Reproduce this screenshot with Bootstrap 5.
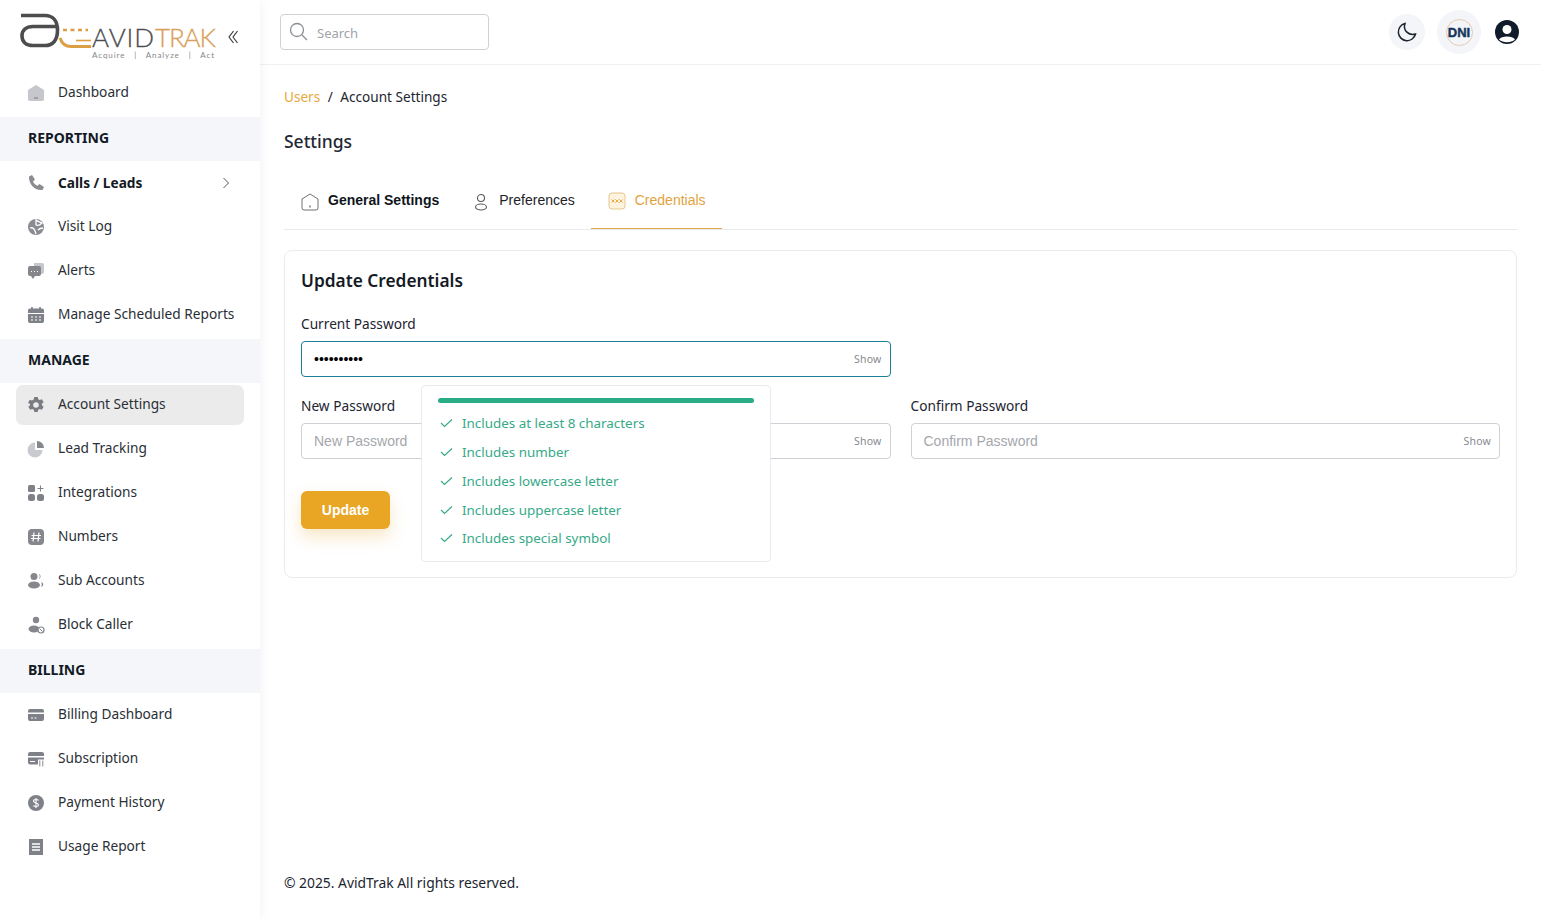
<!DOCTYPE html>
<html lang="en">
<head>
<meta charset="utf-8">
<title>Account Settings</title>
<link href="https://cdn.jsdelivr.net/npm/bootstrap@5.3.0/dist/css/bootstrap.min.css" rel="stylesheet">
<style>
html,body{height:100%;overflow:hidden}
body{font-family:"Noto Sans",sans-serif;font-size:13.7px;color:#1c2530;background:#fff}
.shell{height:919px}
.side{width:260px;flex:none;box-shadow:0 0 12px rgba(30,40,70,.06);background:#fff;z-index:2}
.logo-row{height:71px;padding:12px 0 0 20px}
.chev{margin:18px 0 0 10px}
.tile{height:40px;margin:2px 16px;padding:0 0 2px 11px;border-radius:7px;gap:13px;color:#2a2f36;line-height:1;font-size:13.7px}
.tile svg{width:18px;height:18px;flex:none;margin-top:2px}
.tile.on{background:#ebebec}
.tile.strong{font-weight:700;color:#14191f;padding-bottom:0}
.tile.strong svg{margin-top:0}
.band{height:44px;padding:0 0 4px 28px;background:#f4f6fa;font-weight:700;color:#121a26;margin-top:2px;font-size:14px}
.topbar{height:65px;padding:0 22px 0 20px;border-bottom:1px solid #f0f1f3}
.seek{width:209px;height:36px;border:1px solid #ced1d6;border-radius:4px;padding-left:8px;gap:9px;color:#a0a4aa;font-size:13px}
.seek span{margin-top:3px}
.seek svg{margin-top:-2px}
.roundbtn{border-radius:50%;background:#f3f5f9}
.r36{width:36px;height:36px}
.r44{width:44px;height:44px;margin:0 14px 0 12px}
.dni{width:27px;height:27px;border-radius:50%;border:1px solid #e6c9b0;font:900 13px "Liberation Sans",sans-serif;color:#16345c;-webkit-text-stroke:.4px #16345c}
.page{padding:0 24px}
.crumbs{margin-top:22px;height:20px;gap:7.5px;line-height:20px;font-size:13.6px}
.crumbs .u{color:#e9a83c}
.pg-title{font-size:17.5px;font-weight:500;margin:21px 0 0;line-height:26px;color:#1f2833}
.tabbar{margin-top:16px;border-bottom:1px solid #e8e9eb;height:60px;font-family:"Liberation Sans",sans-serif;font-size:14px}
.tabi{padding:2px 16px 0;gap:9px;color:#1d2229}
.tabi svg{width:18px;height:18px;flex:none;margin-top:2px}
.tabi.b{font-weight:700;color:#10151c;padding:2px 17px 0}
.tabi.act{color:#e2a33d;border-bottom:1px solid #e0a94f;padding:2px 16.500px 0 17px}
.panel{margin-top:20px;height:328px;border:1px solid #e9ebee;border-radius:8px;padding:16px}
.panel h2{font-size:17.3px;font-weight:600;margin:1px 0 0;line-height:26px;color:#141b26}
.lbl{line-height:20px;margin:0 0 7px;color:#1c2530}
.gut{--bs-gutter-x:20px;margin-top:19px}
.flabel1{margin-top:20px}
.fld{height:36px;border:1px solid #ced1d6;border-radius:4px;font:14px "Liberation Sans",sans-serif;padding:0 12px;color:#a4a7ac}
.fld.focus{border-color:#1d7f93;color:#000}
.showit{font:10.5px "Noto Sans",sans-serif;color:#858a90;letter-spacing:.2px;margin-right:-4px}
.go{width:89px;height:38px;margin-top:32px;background:#e9a524;border:0;border-radius:6px;color:#fff;font:700 14px "Liberation Sans",sans-serif;box-shadow:0 8px 16px rgba(233,165,36,.25)}
.pop{position:absolute;left:130px;top:-11px;width:350px;height:177px;background:#fff;border:1px solid #e9ebee;border-radius:4px;padding:12px 16px 0;z-index:3}
.bar{height:5px;background:#2aad87;border-radius:3px;margin-bottom:6px}
.chk{height:28.75px;color:#36a988;gap:9px;font-size:13.4px}
.chk svg{margin-left:2px}
.foot{height:70px;padding:0 24px 25px;font-size:13.85px}
</style>
</head>
<body>
<div class="d-flex shell">
  <aside class="side d-flex flex-column">
    <div class="logo-row d-flex">
      <svg width="198" height="50" viewBox="20 12 198 50">
        <path d="M21 15.500H45C53 15.500 57.500 21 57.500 30C57.500 40 53 45.500 45 45.500H33C26 45.500 22 41.500 22 36C22 30.500 26 26.500 33 26.500H57" fill="none" stroke="#4d4d4f" stroke-width="3.600"/>
        <path d="M60 38C62 44 65 46.500 71 46.500H91" fill="none" stroke="#dd9f45" stroke-width="3"/>
        <path d="M63 30H88" fill="none" stroke="#dd9f45" stroke-width="2.500" stroke-dasharray="4 3.500"/>
        <path d="M76 40.500H91" fill="none" stroke="#dd9f45" stroke-width="1.600"/>
        <text x="92" y="47" font-family="Lato,sans-serif" font-weight="300" font-size="26" fill="#4d4d4f" stroke="#4d4d4f" stroke-width=".3" textLength="62">AVID</text>
        <text x="155" y="47" font-family="Lato,sans-serif" font-weight="300" font-size="26" fill="#d9a05a" stroke="#d9a05a" stroke-width=".3" textLength="61">TRAK</text>
        <text x="92" y="58" font-family="Lato,sans-serif" font-size="8" fill="#85878a" textLength="122" xml:space="preserve">Acquire   |   Analyze   |   Act</text>
      </svg>
      <svg class="chev" width="10" height="14" viewBox="0 0 10 14" fill="none" stroke="#333" stroke-width="1.100"><path d="M5.500 1 1 7l4.500 6M9.500 1 5 7l4.500 6"/></svg>
    </div>
    <div class="tile d-flex align-items-center"><svg viewBox="0 0 18 18"><path d="M9 1 17 6v9a2 2 0 0 1-2 2H3a2 2 0 0 1-2-2V6z" fill="#c6c7cd"/><path d="M7 14h4" stroke="#777" stroke-width="1"/></svg>Dashboard</div>
    <div class="band d-flex align-items-center">REPORTING</div>
    <div class="tile strong d-flex align-items-center"><svg viewBox="0 0 18 18"><path d="M2 2.500 5 1l3 4.500-2 2c.8 2 2.200 3.300 4.500 4.200L12.500 10l4.500 3-1.500 3C8 17 1.500 10 2 2.500z" fill="#8a8c92"/></svg>Calls / Leads<svg class="ms-auto chevr" viewBox="0 0 8 12" fill="none" stroke="#555" stroke-width="1" style="width:8px;height:12px;margin-right:14px"><path d="m1.500 1 5 5-5 5"/></svg></div>
    <div class="tile d-flex align-items-center"><svg viewBox="0 0 18 18"><circle cx="9" cy="9" r="8" fill="#8a8c92"/><path d="M9 2c2 2 5 2 6 3-2 2-4 3-6 2zM3 10c3-1 5 1 6 6M11 12c2-2 3-2 5-2" stroke="#fff" stroke-width="1.300" fill="none"/></svg>Visit Log</div>
    <div class="tile d-flex align-items-center"><svg viewBox="0 0 18 18"><path d="M7 1h8a2 2 0 0 1 2 2v7a2 2 0 0 1-2 2H7z" fill="#c6c7cd"/><path d="M3 4h9a2 2 0 0 1 2 2v6a2 2 0 0 1-2 2H8l-2 3-2-3H3a2 2 0 0 1-2-2V6a2 2 0 0 1 2-2z" fill="#84868c"/><path d="M4 9.500h1M7 9.500h1M10 9.500h1" stroke="#fff" stroke-width="1.200"/></svg>Alerts</div>
    <div class="tile d-flex align-items-center"><svg viewBox="0 0 18 18"><path d="M3 2.500h12a2 2 0 0 1 2 2V7H1V4.500a2 2 0 0 1 2-2zM1 8h16v7a2 2 0 0 1-2 2H3a2 2 0 0 1-2-2z" fill="#7f8188"/><path d="M5 1v3M13 1v3" stroke="#7f8188" stroke-width="1.600"/><path d="M4 11h2M8 11h2M12 11h2M4 14h2M8 14h2M12 14h2" stroke="#fff" stroke-width="1.200"/></svg>Manage Scheduled Reports</div>
    <div class="band d-flex align-items-center">MANAGE</div>
    <div class="tile on d-flex align-items-center"><svg viewBox="0 0 18 18"><path fill="#7a7c82" fill-rule="evenodd" d="M7.300 1h3.400l.5 2.200 1.500.8 2.200-.7 1.700 3-1.700 1.500v1.400l1.700 1.500-1.700 3-2.200-.7-1.500.8-.5 2.200H7.300l-.5-2.200-1.500-.8-2.200.7-1.700-3 1.700-1.500V8.300L1.100 6.800l1.700-3 2.200.7 1.500-.8zM9 6.200a2.800 2.800 0 1 0 0 5.600 2.800 2.800 0 0 0 0-5.600z"/></svg>Account Settings</div>
    <div class="tile d-flex align-items-center"><svg viewBox="0 0 18 18"><path d="M8 2.500A7.500 7.500 0 1 0 15.500 10H8z" fill="#c9cacf"/><path d="M10 1a7 7 0 0 1 7 7h-7z" fill="#85878d"/></svg>Lead Tracking</div>
    <div class="tile d-flex align-items-center"><svg viewBox="0 0 18 18" fill="#7f8188"><rect x="1" y="1" width="7" height="7" rx="1.500"/><rect x="1" y="10" width="7" height="7" rx="2.500"/><rect x="10" y="10" width="7" height="7" rx="2.500"/><path d="M13.500 1.500v6M10.500 4.500h6" stroke="#7f8188" stroke-width="1"/></svg>Integrations</div>
    <div class="tile d-flex align-items-center"><svg viewBox="0 0 18 18"><rect x="1" y="1" width="16" height="16" rx="4" fill="#85878d"/><path d="M7 4.500 6 13.500M12 4.500l-1 9M4.500 7.500h9.500M4 10.500h9.500" stroke="#fff" stroke-width="1.200"/></svg>Numbers</div>
    <div class="tile d-flex align-items-center"><svg viewBox="0 0 18 18" fill="#85878d"><circle cx="7" cy="4.500" r="3.500"/><ellipse cx="7" cy="13" rx="6" ry="3.500"/><path d="M12 2c2 .5 2 4.500 0 5 1-1.500 1-3.500 0-5zM14 10c3 1 3 4 0 5 1-1.500 1-3.500 0-5z"/></svg>Sub Accounts</div>
    <div class="tile d-flex align-items-center"><svg viewBox="0 0 18 18" fill="#85878d"><circle cx="9" cy="4" r="3.200"/><ellipse cx="7" cy="13" rx="5.500" ry="3.500"/><circle cx="14" cy="14" r="3" fill="#fff" stroke="#85878d" stroke-width="1.200"/><path d="m12.500 12.500 3 3" stroke="#85878d"/></svg>Block Caller</div>
    <div class="band d-flex align-items-center">BILLING</div>
    <div class="tile d-flex align-items-center"><svg viewBox="0 0 18 18"><path d="M3 3h12a2 2 0 0 1 2 2v1.500H1V5a2 2 0 0 1 2-2zM1 8h16v5a2 2 0 0 1-2 2H3a2 2 0 0 1-2-2z" fill="#7f8188"/><path d="M4 12h2M7.500 12h2" stroke="#fff" stroke-width="1"/></svg>Billing Dashboard</div>
    <div class="tile d-flex align-items-center"><svg viewBox="0 0 18 18"><path d="M3 2h12a2 2 0 0 1 2 2v2H1V4a2 2 0 0 1 2-2zM1 7.500h16v2h-6v5H3a2 2 0 0 1-2-2z" fill="#7f8188"/><path d="M3 11.500h5" stroke="#fff" stroke-width="1"/><path d="M12.800 10.500v6M15.800 10.500v6" stroke="#7f8188" stroke-width=".9"/></svg>Subscription</div>
    <div class="tile d-flex align-items-center"><svg viewBox="0 0 18 18"><circle cx="9" cy="9" r="8" fill="#7f8188"/><path d="M11.500 6.500C11 5 6.500 5 6.500 7c0 2.500 5 1.500 5 4 0 2-4.500 2-5 .5M9 4v10" fill="none" stroke="#fff" stroke-width="1.100"/></svg>Payment History</div>
    <div class="tile d-flex align-items-center"><svg viewBox="0 0 18 18"><rect x="2" y="1" width="14" height="16" fill="#7f8188"/><path d="M5 6h8M5 9h8M5 12h8" stroke="#fff" stroke-width="1.300"/></svg>Usage Report</div>
  </aside>

  <main class="flex-grow-1 d-flex flex-column min-w-0">
    <header class="topbar d-flex align-items-center">
      <div class="seek d-flex align-items-center">
        <svg width="19" height="19" viewBox="0 0 19 19" fill="none" stroke="#8b8f95" stroke-width="1.300"><circle cx="8" cy="8" r="6.500"/><path d="m13 13 5 5"/></svg>
        <span>Search</span>
      </div>
      <div class="roundbtn r36 ms-auto d-flex align-items-center justify-content-center">
        <svg width="22" height="22" viewBox="0 0 22 22" fill="none" stroke="#1b2530" stroke-width="1.500"><path d="M9 2.500a8.700 8.700 0 1 0 10.500 10.500C13 15 6.500 9.500 9 2.500z"/></svg>
      </div>
      <div class="roundbtn r44 d-flex align-items-center justify-content-center"><div class="dni d-flex align-items-center justify-content-center">DNI</div></div>
      <svg width="24" height="24" viewBox="0 0 24 24"><circle cx="12" cy="12" r="12" fill="#111c2b"/><circle cx="12" cy="9.500" r="4.500" fill="#fff"/><path d="M4 19.500C6 15.500 18 15.500 20 19.500 16 23 8 23 4 19.500z" fill="#fff"/></svg>
    </header>

    <div class="page flex-grow-1">
      <div class="crumbs d-flex"><span class="u">Users</span><span>/</span><span>Account Settings</span></div>
      <h1 class="pg-title">Settings</h1>
      <div class="tabbar d-flex">
        <div class="tabi b d-flex align-items-center"><svg viewBox="0 0 18 18" fill="none" stroke="#6d7075" stroke-width="1"><path d="M9 1 17 6v9a2 2 0 0 1-2 2H3a2 2 0 0 1-2-2V6z"/><path d="M9 12.500v2" stroke-width="1.400"/></svg>General Settings</div>
        <div class="tabi d-flex align-items-center"><svg viewBox="0 0 18 18" fill="none" stroke="#55585e" stroke-width="1.100"><circle cx="9" cy="5" r="3.500"/><ellipse cx="9" cy="14" rx="5.500" ry="3"/></svg>Preferences</div>
        <div class="tabi act d-flex align-items-center"><svg viewBox="0 0 18 18" fill="#fdf3df" stroke="#e6c58e" stroke-width="1"><rect x="1" y="1" width="16" height="16" rx="3"/><path d="m3.500 7.500 3 3m0-3-3 3m4-3 3 3m0-3-3 3m4-3 3 3m0-3-3 3" stroke="#e2a33d" stroke-width=".9"/></svg>Credentials</div>
      </div>

      <section class="panel">
        <h2>Update Credentials</h2>
        <div class="row gut flabel1">
          <div class="col-6">
            <div class="lbl">Current Password</div>
            <div class="fld focus d-flex align-items-center"><span>••••••••••</span><span class="showit ms-auto">Show</span></div>
          </div>
        </div>
        <div class="row gut">
          <div class="col-6 position-relative">
            <div class="lbl">New Password</div>
            <div class="fld d-flex align-items-center"><span>New Password</span><span class="showit ms-auto">Show</span></div>
            <div class="pop">
              <div class="bar"></div>
              <div class="chk d-flex align-items-center"><svg width="13" height="10" viewBox="0 0 13 10" fill="none" stroke="#36a988" stroke-width="1.200"><path d="m1 5 3.500 3.500L12 1.500"/></svg>Includes at least 8 characters</div>
              <div class="chk d-flex align-items-center"><svg width="13" height="10" viewBox="0 0 13 10" fill="none" stroke="#36a988" stroke-width="1.200"><path d="m1 5 3.500 3.500L12 1.500"/></svg>Includes number</div>
              <div class="chk d-flex align-items-center"><svg width="13" height="10" viewBox="0 0 13 10" fill="none" stroke="#36a988" stroke-width="1.200"><path d="m1 5 3.500 3.500L12 1.500"/></svg>Includes lowercase letter</div>
              <div class="chk d-flex align-items-center"><svg width="13" height="10" viewBox="0 0 13 10" fill="none" stroke="#36a988" stroke-width="1.200"><path d="m1 5 3.500 3.500L12 1.500"/></svg>Includes uppercase letter</div>
              <div class="chk d-flex align-items-center"><svg width="13" height="10" viewBox="0 0 13 10" fill="none" stroke="#36a988" stroke-width="1.200"><path d="m1 5 3.500 3.500L12 1.500"/></svg>Includes special symbol</div>
            </div>
          </div>
          <div class="col-6">
            <div class="lbl">Confirm Password</div>
            <div class="fld d-flex align-items-center"><span>Confirm Password</span><span class="showit ms-auto">Show</span></div>
          </div>
        </div>
        <button class="btn go d-block" type="button">Update</button>
      </section>
    </div>
    <footer class="foot d-flex align-items-end">© 2025. AvidTrak All rights reserved.</footer>
  </main>
</div>
<script src="https://cdn.jsdelivr.net/npm/bootstrap@5.3.0/dist/js/bootstrap.bundle.min.js"></script>
</body>
</html>
